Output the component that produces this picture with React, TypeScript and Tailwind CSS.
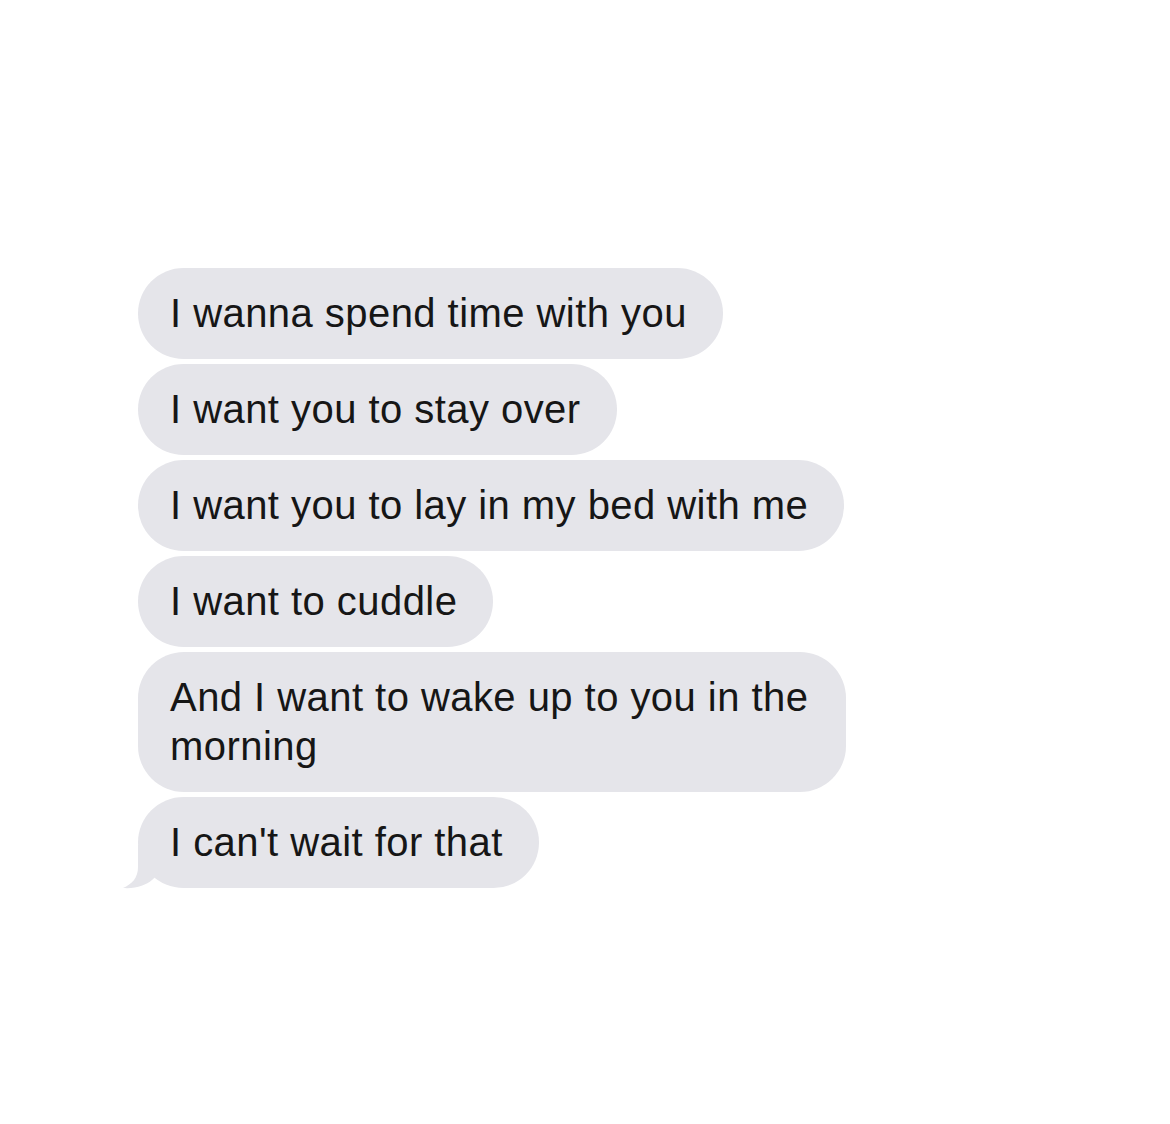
const messages = [
    "I wanna spend time with you",
    "I want you to stay over",
    "I want you to lay in my bed with me",
    "I want to cuddle",
    "And I want to wake up to you in the morning",
];

function Bubble({text, tail}: {text: string; tail?: boolean}) {
    return (
        <div className="relative max-w-[708px] rounded-[46px] bg-[#e5e5ea] pl-[32px] pr-[36px] py-[21px] text-[40px] leading-[49px] tracking-[0.45px] text-[#161616]">
            {text}
            {tail && (
                <svg
                    className="absolute left-[-20px] bottom-[-1px]"
                    width="60"
                    height="44"
                    viewBox="0 0 60 44"
                >
                    <path
                        d="M20 0 L20 22 C20 33 14 39 5 43 C18 44 28 40 34 35 L50 20 L50 0 Z"
                        fill="#e5e5ea"
                    />
                </svg>
            )}
        </div>
    );
}

export default function App() {
    return (
        <div
            className="min-h-[1124px] w-[1170px] bg-white pl-[138px] pt-[268px]"
            style={{fontFamily: '"Liberation Sans", Arial, sans-serif'}}
        >
            <div className="flex flex-col items-start gap-[5px]">
                {messages.map((m) => (
                    <Bubble key={m} text={m}/>
                ))}
                <Bubble text="I can't wait for that" tail/>
            </div>
        </div>
    );
}
